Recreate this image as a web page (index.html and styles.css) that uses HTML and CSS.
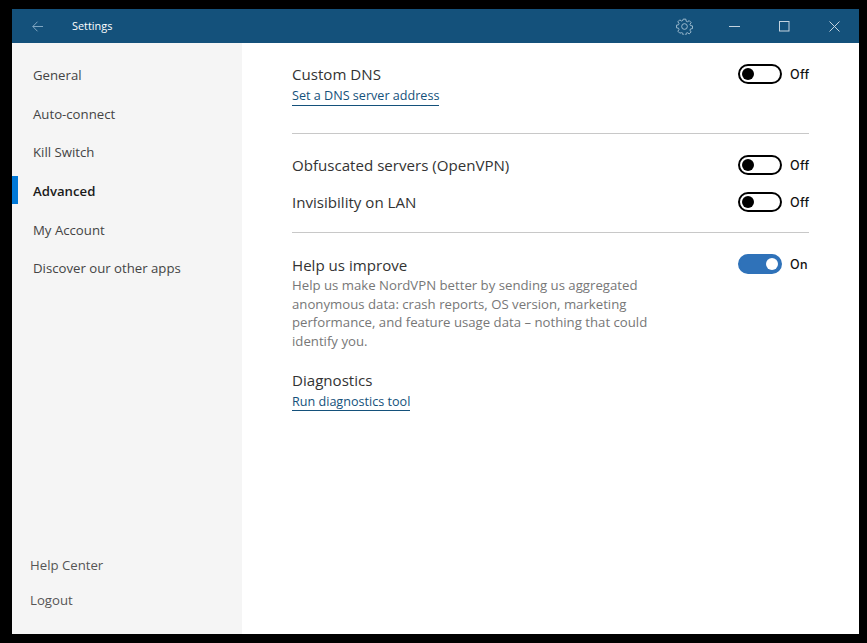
FILE: index.html
```html
<!DOCTYPE html>
<html lang="en">
<head>
<meta charset="utf-8">
<title>Settings</title>
<link rel="stylesheet" href="styles.css">
</head>
<body>
<div class="window">
  <header class="titlebar">
    <svg class="back" width="11" height="11" viewBox="0 0 11 11"><path d="M11 5.5H.8M5.5.7.8 5.5l4.7 4.8" fill="none" stroke="#7fa6c2" stroke-width="1"/></svg>
    <span class="title">Settings</span>
    <svg class="gear" width="17" height="17" viewBox="0 0 18 18"><path d="M7.6 1h2.8l.4 2.2 1.3.6 1.9-1.2 2 2-1.2 1.9.5 1.3 2.2.4v2.8l-2.2.4-.5 1.3 1.2 1.9-2 2-1.9-1.2-1.3.5-.4 2.3H7.6l-.4-2.3-1.3-.5L4 15.8l-2-2 1.2-1.9-.5-1.3L.5 10.2V7.4l2.2-.4.5-1.3L2 3.8l2-2 1.9 1.2 1.3-.6z" transform="translate(0 .2)" fill="none" stroke="#a3bfd2" stroke-width="1" stroke-linejoin="round"/><circle cx="9" cy="9" r="3" fill="none" stroke="#a3bfd2" stroke-width="1"/></svg>
    <div class="controls">
      <span class="ctl"><svg width="11" height="11" viewBox="0 0 11 11"><path d="M0 5.5h11" stroke="#c4d3df" stroke-width="1"/></svg></span>
      <span class="ctl"><svg width="11" height="11" viewBox="0 0 11 11"><rect x=".5" y=".5" width="9.5" height="9.5" fill="none" stroke="#c4d3df" stroke-width="1"/></svg></span>
      <span class="ctl"><svg width="11" height="11" viewBox="0 0 11 11"><path d="M.5.5l10 10M10.5.5l-10 10" stroke="#c4d3df" stroke-width="1"/></svg></span>
    </div>
  </header>
  <div class="body">
    <nav class="sidebar">
      <ul class="menu">
        <li class="item">General</li>
        <li class="item">Auto-connect</li>
        <li class="item">Kill Switch</li>
        <li class="item active">Advanced</li>
        <li class="item">My Account</li>
        <li class="item">Discover our other apps</li>
      </ul>
      <ul class="footer-menu">
        <li class="foot">Help Center</li>
        <li class="foot">Logout</li>
      </ul>
    </nav>
    <main class="content">
      <section class="group first">
        <div class="row">
          <div class="info">
            <div class="label">Custom DNS</div>
            <a class="link">Set a DNS server address</a>
          </div>
          <div class="toggle lifted"><span class="switch"><span class="knob"></span></span><span class="state">Off</span></div>
        </div>
      </section>
      <section class="group second">
        <div class="row compact">
          <div class="label">Obfuscated servers (OpenVPN)</div>
          <div class="toggle lifted"><span class="switch"><span class="knob"></span></span><span class="state">Off</span></div>
        </div>
        <div class="row compact">
          <div class="label">Invisibility on LAN</div>
          <div class="toggle lifted"><span class="switch"><span class="knob"></span></span><span class="state">Off</span></div>
        </div>
      </section>
      <section class="group third">
        <div class="row">
          <div class="info">
            <div class="label">Help us improve</div>
            <p class="desc">Help us make NordVPN better by sending us aggregated anonymous data: crash reports, OS version, marketing performance, and feature usage data – nothing that could identify you.</p>
          </div>
          <div class="toggle raised"><span class="switch on"><span class="knob"></span></span><span class="state">On</span></div>
        </div>
        <div class="diag">
          <div class="label">Diagnostics</div>
          <a class="link plain">Run diagnostics tool</a>
        </div>
      </section>
    </main>
  </div>
</div>
</body>
</html>
```
FILE: styles.css
```css
* { box-sizing: border-box; }
html, body { margin: 0; height: 100%; }
body {
  background: #000;
  padding: 9px 8px 9px 12px;
  font-family: "Open Sans", "Noto Sans", sans-serif;
  overflow: hidden;
}
.window { width: 847px; height: 625px; display: flex; flex-direction: column; background: #fff; }
.titlebar {
  height: 34px; flex: none; background: #14517b; display: flex; align-items: center;
  color: #fff; padding-left: 20px;
}
.back { flex: none; }
.title { margin-left: 29px; padding-bottom: 2px; font-size: 10.9px; flex: 1; }
.gear { flex: none; margin-right: 16px; }
.controls { display: flex; }
.ctl { width: 50px; height: 34px; display: flex; align-items: center; justify-content: center; }
.body { flex: 1; display: flex; min-height: 0; }
.sidebar {
  width: 230px; flex: none; background: #f5f5f5; display: flex; flex-direction: column;
  justify-content: space-between; padding: 18px 0 16px;
}
.menu, .footer-menu { list-style: none; margin: 0; padding: 0; }
.menu { display: flex; flex-direction: column; gap: 10.7px; }
.item {
  height: 28px; line-height: 28px; padding-left: 21px; font-size: 13.2px; color: #444;
  border-left: 0 solid transparent;
}
.item.active {
  border-left: 6px solid #0078d7; padding-left: 15px; color: #1a1a1a; font-weight: 600;
  margin: -1px 0 1px; line-height: 30px;
}
.foot { height: 35px; line-height: 35px; padding-left: 18px; font-size: 13.2px; color: #555; }
.content { flex: 1; padding: 0 50px; }
.group { border-bottom: 1px solid #c8c8c8; }
.first { padding-top: 22px; height: 91px; }
.second { padding-top: 13px; height: 99px; }
.third { border-bottom: 0; padding-top: 23px; }
.row { display: flex; justify-content: space-between; align-items: flex-start; }
.compact { height: 37px; align-items: center; }
.compact .label { margin-bottom: 2px; }
.label { font-size: 15.1px; line-height: 18px; color: #333; }
.link {
  display: inline-block; font-size: 12.6px; line-height: 17px; color: #14517b;
  border-bottom: 1px solid #14517b; margin-top: -2px; padding-bottom: 1px;
}
.link.plain { margin-top: 0; padding-bottom: 0; line-height: 16px; }
.desc { width: 380px; margin: 2px 0 0; font-size: 13.2px; line-height: 18.7px; color: #777; }
.toggle { display: flex; align-items: center; width: 71px; gap: 8px; font-size: 12px; color: #111; }
.toggle.lifted { margin-top: -1px; }
.toggle.raised { margin-top: -2px; }
.switch {
  width: 44px; height: 20px; flex: none; border: 2px solid #000; border-radius: 10px;
  display: flex; align-items: center; padding-left: 2px; background: #fff;
}
.knob { width: 12px; height: 12px; border-radius: 50%; background: #000; }
.switch.on { background: #2f72b9; border-color: #2f72b9; justify-content: flex-end; padding: 0 2px 0 0; }
.switch.on .knob { background: #fff; }
.state { font-family: "Inter", sans-serif; font-size: 12.6px; font-weight: 500; letter-spacing: .3px; }
.diag { margin-top: 20px; }
```
